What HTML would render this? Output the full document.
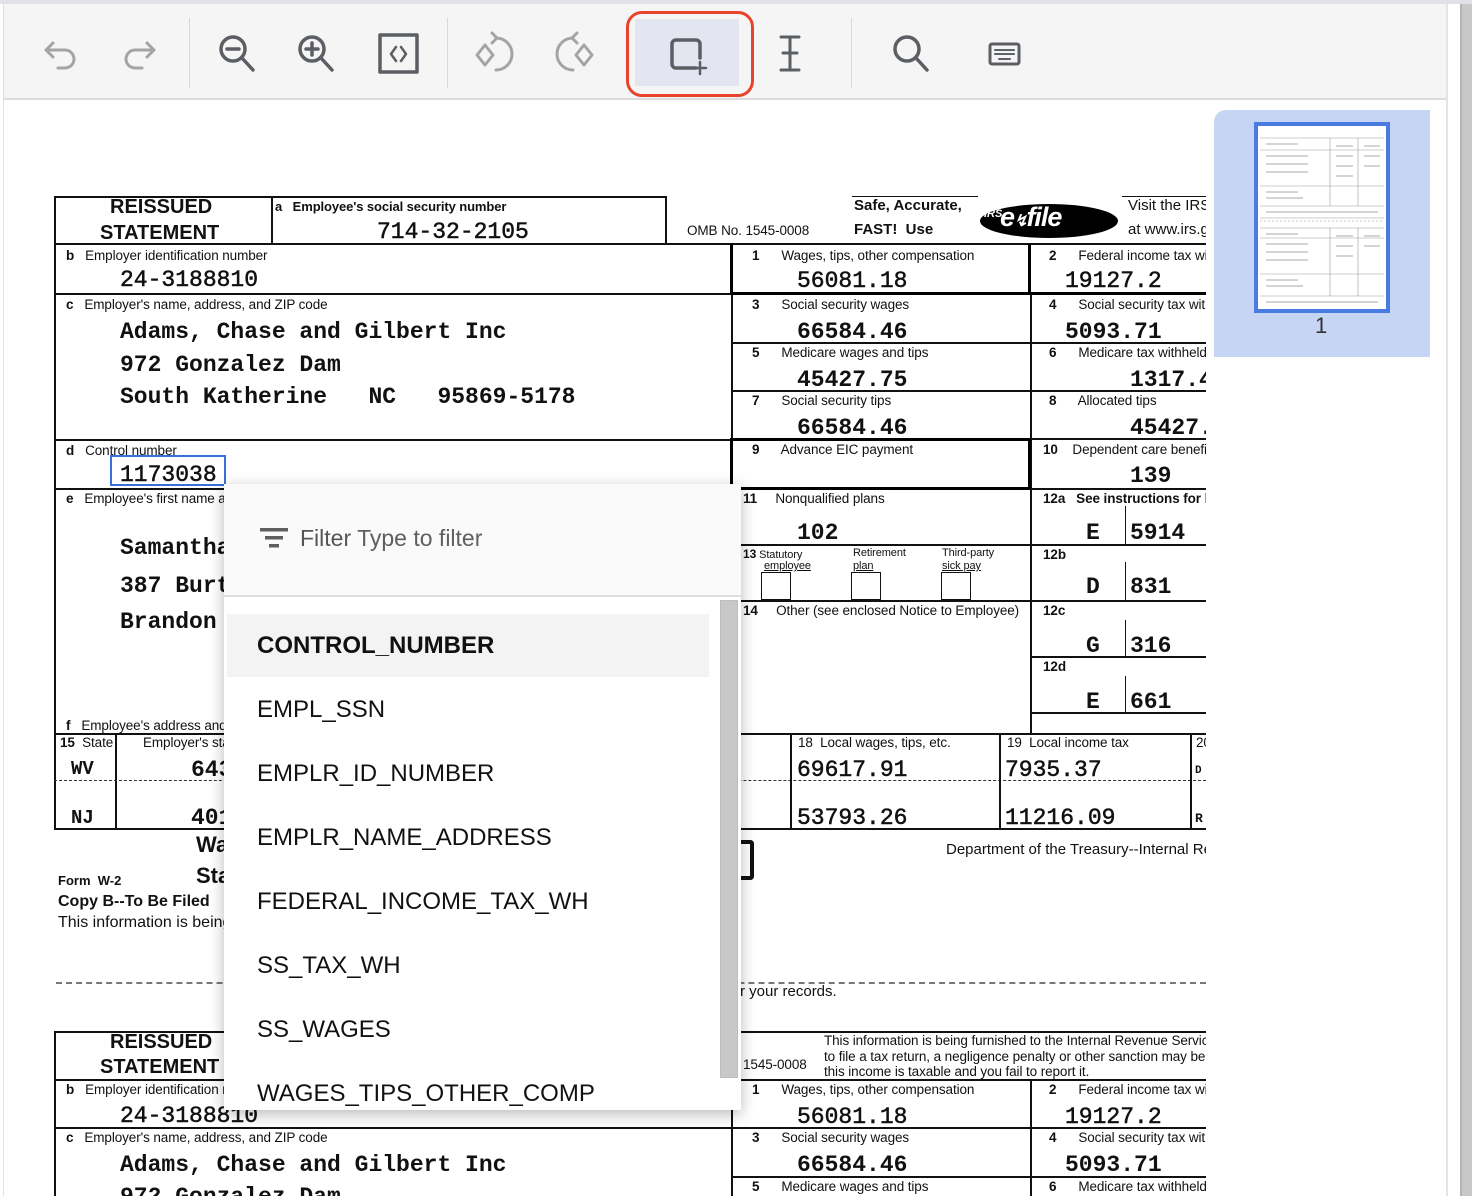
<!DOCTYPE html>
<html><head><meta charset="utf-8">
<style>
*{margin:0;padding:0;box-sizing:border-box}
body{width:1472px;height:1196px;overflow:hidden;background:#fff;position:relative;font-family:"Liberation Sans",Arial,sans-serif;color:#111}
.a{position:absolute}
.t{position:absolute;white-space:nowrap}
.l{position:absolute;white-space:nowrap;font-size:13.5px;letter-spacing:-0.1px;color:#111}
.lb{font-weight:bold}
.v{position:absolute;white-space:nowrap;font-family:"Liberation Mono",monospace;font-weight:bold;font-size:23px;color:#111;margin-top:1px}
.h{position:absolute;background:#111;height:1.5px}
.vl{position:absolute;background:#111;width:1.5px}
.hk{position:absolute;background:#000;height:3px}
.vk{position:absolute;background:#000;width:3px}
.dash{position:absolute;height:0;border-top:1px dashed #333}
.item{position:absolute;left:33px;font-size:24px;color:#111;white-space:nowrap}
</style></head><body>

<div class="a" style="left:0;top:0;width:1472px;height:4px;background:#e2e2e6"></div>
<div class="a" style="left:3px;top:4px;width:1444px;height:96px;background:#f5f5f5;border-bottom:2px solid #dcdcdc;border-left:1px solid #ddd"></div>
<div class="a" style="left:1446px;top:4px;width:2px;height:1192px;background:#e4e4e4"></div>
<div class="a" style="left:1460px;top:4px;width:12px;height:1192px;background:#c8c8c8;border-left:2px solid #b4b4b4"></div>
<div class="a" style="left:3px;top:100px;width:1px;height:1096px;background:#e4e4e4"></div>

<div class="a" style="left:189px;top:18px;width:1px;height:70px;background:#d8d8d8"></div>
<div class="a" style="left:447px;top:18px;width:1px;height:70px;background:#d8d8d8"></div>
<div class="a" style="left:851px;top:18px;width:1px;height:70px;background:#d8d8d8"></div>

<div class="a" style="left:635px;top:19px;width:104px;height:67px;background:#e3e6f1"></div>
<div class="a" style="left:626px;top:11px;width:128px;height:86px;border:3px solid #e8432b;border-radius:16px"></div>

<svg class="a" style="left:0;top:0" width="1100" height="100" fill="none" stroke-linecap="round" stroke-linejoin="round">
 <g stroke="#a4a4a4" stroke-width="3">
  <path d="M53 43 L46 50 L53 57"/><path d="M47 50 H65 a9 9 0 0 1 0 18 H58"/>
 </g>
 <g stroke="#a4a4a4" stroke-width="3">
  <path d="M147 43 L154 50 L147 57"/><path d="M153 50 H135 a9 9 0 0 0 0 18 H142"/>
 </g>
 <g stroke="#5b5e63" stroke-width="3.5">
  <circle cx="233" cy="49" r="12"/><path d="M242 58 L253 70"/><path d="M227 49 H239"/>
 </g>
 <g stroke="#5b5e63" stroke-width="3.5">
  <circle cx="312" cy="49" r="12"/><path d="M321 58 L332 70"/><path d="M306 49 H318 M312 43 V55"/>
 </g>
 <rect x="380" y="35" width="37" height="37" stroke="#5b5e63" stroke-width="3.5"/>
 <path d="M396 47 L391 54 L396 61 M401 47 L406 54 L401 61" stroke="#5b5e63" stroke-width="2.5"/>
 <g stroke="#a4a4a4" stroke-width="3">
  <path d="M485 45 L477 55 L485 65 L493 55 Z"/>
  <path d="M496 38 a16 16 0 0 1 0 32"/><path d="M492 33 L497 38 L492 43"/>
 </g>
 <g stroke="#a4a4a4" stroke-width="3">
  <path d="M584 45 L592 55 L584 65 L576 55 Z"/>
  <path d="M573 38 a16 16 0 0 0 0 32"/><path d="M577 33 L572 38 L577 43"/>
 </g>
 <path d="M696 68 H676 a4 4 0 0 1 -4 -4 V44 a4 4 0 0 1 4 -4 H696 a4 4 0 0 1 4 4 V58" stroke="#5b5e63" stroke-width="3.5"/>
 <path d="M700 62 V74 M694 68 H706" stroke="#5b5e63" stroke-width="2.5"/>
 <g stroke="#5b5e63" stroke-width="3">
  <path d="M781 37 H799 M781 70 H799 M790 37 V70 M783 53 H797"/>
 </g>
 <g stroke="#5b5e63" stroke-width="3.5">
  <circle cx="907" cy="49" r="12"/><path d="M916 58 L927 70"/>
 </g>
 <rect x="990" y="44" width="29" height="20" rx="2" stroke="#5b5e63" stroke-width="3"/>
 <path d="M995 50 H1014 M995 54 H1014 M999 59 H1010" stroke="#5b5e63" stroke-width="2" stroke-dasharray="2 1.5"/>
</svg>

<div class="a" style="left:1214px;top:110px;width:216px;height:247px;background:#c5d5f3;border-radius:12px 0 0 0"></div>
<div class="a" style="left:1254px;top:122px;width:136px;height:191px;background:#fff;border:4px solid #4a7be0;overflow:hidden">
 <svg width="128" height="183" stroke="#999" stroke-width="0.6">
  <path d="M2 12 H126 M2 24 H126 M2 60 H126 M2 80 H126 M2 92 H126 M72 12 V80 M100 12 V80"/>
  <path d="M2 102 H126 M2 112 H126 M2 148 H126 M2 170 H126 M72 102 V170 M100 102 V170"/>
  <path d="M2 95 H126" stroke-dasharray="2 2"/>
  <g stroke="#bbb" stroke-width="1.2"><path d="M8 18 H40 M8 30 H50 M8 38 H50 M8 46 H50 M78 20 H95 M78 30 H95 M78 40 H95 M78 50 H95 M106 20 H122 M106 30 H122 M106 40 H122 M8 66 H40 M8 72 H45 M8 86 H120"/>
  <path d="M8 108 H40 M8 118 H50 M8 126 H50 M8 134 H50 M78 110 H95 M78 120 H95 M78 130 H95 M106 110 H122 M106 120 H122 M8 154 H40 M8 160 H45 M8 176 H120"/></g>
 </svg>
</div>
<div class="t" style="left:1315px;top:313px;font-size:22px;color:#333">1</div>

<div class="a" style="left:0;top:0;width:1206px;height:1196px;overflow:hidden">
 <div class="h" style="left:54px;top:196px;width:612px"></div>
 <div class="h" style="left:54px;top:243px;width:1152px;height:2px"></div>
 <div class="vl" style="left:54px;top:196px;height:634px"></div>
 <div class="vl" style="left:271px;top:196px;height:48px"></div>
 <div class="vl" style="left:665px;top:196px;height:48px"></div>
 <div class="h" style="left:852px;top:196px;width:126px;height:1px"></div>
 <div class="h" style="left:1122px;top:196px;width:84px;height:1px"></div>
 <div class="t lb" style="left:110px;top:196px;font-size:20px;font-weight:bold">REISSUED</div>
 <div class="t" style="left:100px;top:222px;font-size:20px;font-weight:bold">STATEMENT</div>
 <div class="l lb" style="left:275px;top:199px;font-weight:bold;font-size:13px">a&nbsp;&nbsp; Employee's social security number</div>
 <div class="v" style="left:377px;top:218px;font-weight:normal;-webkit-text-stroke:0.5px #111">714-32-2105</div>
 <div class="l" style="left:687px;top:223px">OMB No. 1545-0008</div>
 <div class="t" style="left:854px;top:197px;font-size:15px;font-weight:bold">Safe, Accurate,</div>
 <div class="t" style="left:854px;top:221px;font-size:15px;font-weight:bold">FAST!&nbsp; Use</div>
 <div class="a" style="left:980px;top:204px;width:138px;height:34px;background:#000;border-radius:50%"></div>
 <div class="t" style="left:984px;top:208px;font-size:11px;font-style:italic;font-weight:bold;color:#fff">IRS</div>
 <div class="t" style="left:1000px;top:202px;font-size:27px;font-style:italic;font-weight:bold;color:#fff;letter-spacing:-1px">e<span style="font-size:16px">↯</span>file</div>
 <div class="t" style="left:1128px;top:197px;font-size:15px">Visit the IRS</div>
 <div class="t" style="left:1128px;top:221px;font-size:15px">at www.irs.gov</div>

 <div class="l" style="left:66px;top:248px"><b>b</b>&nbsp;&nbsp; Employer identification number</div>
 <div class="v" style="left:120px;top:266px;font-weight:normal;-webkit-text-stroke:0.5px #111">24-3188810</div>
 <div class="h" style="left:54px;top:293px;width:678px"></div>
 <div class="l" style="left:66px;top:297px"><b>c</b>&nbsp;&nbsp; Employer's name, address, and ZIP code</div>
 <div class="v" style="left:120px;top:318px">Adams, Chase and Gilbert Inc</div>
 <div class="v" style="left:120px;top:351px">972 Gonzalez Dam</div>
 <div class="v" style="left:120px;top:383px">South Katherine&nbsp;&nbsp; NC&nbsp;&nbsp;&nbsp;95869-5178</div>
 <div class="h" style="left:54px;top:439px;width:678px"></div>
 <div class="l" style="left:66px;top:443px"><b>d</b>&nbsp;&nbsp; Control number</div>
 <div class="v" style="left:120px;top:461px;font-weight:normal;-webkit-text-stroke:0.5px #111">1173038</div>
 <div class="a" style="left:110px;top:455px;width:116px;height:31px;border:2px solid #3b6fd8"></div>
 <div class="h" style="left:54px;top:488px;width:678px"></div>
 <div class="l" style="left:66px;top:491px"><b>e</b>&nbsp;&nbsp; Employee's first name and initial</div>
 <div class="v" style="left:120px;top:534px">Samantha</div>
 <div class="v" style="left:120px;top:572px">387 Burton</div>
 <div class="v" style="left:120px;top:608px">Brandon</div>
 <div class="l" style="left:66px;top:718px"><b>f</b>&nbsp;&nbsp; Employee's address and ZIP code</div>
 <div class="h" style="left:54px;top:733px;width:1152px"></div>
 <div class="vl" style="left:115px;top:733px;height:96px"></div>
 <div class="l" style="left:60px;top:735px"><b>15</b>&nbsp; State</div>
 <div class="l" style="left:143px;top:735px">Employer's state ID number</div>
 <div class="v" style="left:71px;top:757px;font-size:19px">WV</div>
 <div class="v" style="left:191px;top:756px">6432</div>
 <div class="dash" style="left:54px;top:780px;width:1152px"></div>
 <div class="v" style="left:71px;top:806px;font-size:19px">NJ</div>
 <div class="v" style="left:191px;top:804px">4012</div>
 <div class="h" style="left:54px;top:828px;width:1152px"></div>
 <div class="vl" style="left:790px;top:733px;height:96px"></div>
 <div class="vl" style="left:999px;top:733px;height:96px"></div>
 <div class="vl" style="left:1190px;top:733px;height:96px"></div>
 <div class="l" style="left:798px;top:735px">18&nbsp; Local wages, tips, etc.</div>
 <div class="l" style="left:1007px;top:735px">19&nbsp; Local income tax</div>
 <div class="l" style="left:1196px;top:735px">20</div>
 <div class="v" style="left:797px;top:756px;font-weight:normal;-webkit-text-stroke:0.5px #111">69617.91</div>
 <div class="v" style="left:1005px;top:756px;font-weight:normal;-webkit-text-stroke:0.5px #111">7935.37</div>
 <div class="v" style="left:797px;top:804px;font-weight:normal;-webkit-text-stroke:0.5px #111">53793.26</div>
 <div class="v" style="left:1005px;top:804px;font-weight:normal;-webkit-text-stroke:0.5px #111">11216.09</div>
 <div class="v" style="left:1195px;top:764px;font-size:11px">D</div>
 <div class="v" style="left:1195px;top:810px;font-size:13px">R</div>

 <div class="vk" style="left:730px;top:244px;height:50px"></div>
 <div class="vk" style="left:1028px;top:244px;height:50px"></div>
 <div class="hk" style="left:730px;top:292px;width:476px"></div>
 <div class="vl" style="left:731px;top:294px;height:440px"></div>
 <div class="vl" style="left:1030px;top:294px;height:440px"></div>
 <div class="h" style="left:731px;top:342px;width:475px"></div>
 <div class="h" style="left:731px;top:390px;width:475px"></div>
 <div class="hk" style="left:730px;top:438px;width:302px"></div>
 <div class="h" style="left:1030px;top:438px;width:176px"></div>
 <div class="vk" style="left:730px;top:438px;height:52px"></div>
 <div class="vk" style="left:1028px;top:438px;height:52px"></div>
 <div class="hk" style="left:730px;top:487px;width:302px"></div>
 <div class="h" style="left:1030px;top:488px;width:176px"></div>
 <div class="h" style="left:731px;top:544px;width:475px"></div>
 <div class="h" style="left:731px;top:600px;width:300px"></div>
 <div class="h" style="left:1030px;top:600px;width:176px"></div>
 <div class="h" style="left:1030px;top:656px;width:176px"></div>
 <div class="h" style="left:1030px;top:712px;width:176px"></div>
 <div class="vl" style="left:1125px;top:506px;height:38px;width:1px"></div>
 <div class="vl" style="left:1125px;top:562px;height:38px;width:1px"></div>
 <div class="vl" style="left:1125px;top:620px;height:37px;width:1px"></div>
 <div class="vl" style="left:1125px;top:676px;height:37px;width:1px"></div>

 <div class="l" style="left:752px;top:248px"><b>1</b>&nbsp;&nbsp;&nbsp;&nbsp;&nbsp; Wages, tips, other compensation</div>
 <div class="v" style="left:797px;top:267px;font-weight:normal;-webkit-text-stroke:0.5px #111">56081.18</div>
 <div class="l" style="left:1049px;top:248px"><b>2</b>&nbsp;&nbsp;&nbsp;&nbsp;&nbsp; Federal income tax withheld</div>
 <div class="v" style="left:1065px;top:267px;font-weight:normal;-webkit-text-stroke:0.5px #111">19127.2</div>
 <div class="l" style="left:752px;top:297px"><b>3</b>&nbsp;&nbsp;&nbsp;&nbsp;&nbsp; Social security wages</div>
 <div class="v" style="left:797px;top:318px">66584.46</div>
 <div class="l" style="left:1049px;top:297px"><b>4</b>&nbsp;&nbsp;&nbsp;&nbsp;&nbsp; Social security tax withheld</div>
 <div class="v" style="left:1065px;top:318px">5093.71</div>
 <div class="l" style="left:752px;top:345px"><b>5</b>&nbsp;&nbsp;&nbsp;&nbsp;&nbsp; Medicare wages and tips</div>
 <div class="v" style="left:797px;top:366px">45427.75</div>
 <div class="l" style="left:1049px;top:345px"><b>6</b>&nbsp;&nbsp;&nbsp;&nbsp;&nbsp; Medicare tax withheld</div>
 <div class="v" style="left:1130px;top:366px">1317.42</div>
 <div class="l" style="left:752px;top:393px"><b>7</b>&nbsp;&nbsp;&nbsp;&nbsp;&nbsp; Social security tips</div>
 <div class="v" style="left:797px;top:414px">66584.46</div>
 <div class="l" style="left:1049px;top:393px"><b>8</b>&nbsp;&nbsp;&nbsp;&nbsp;&nbsp; Allocated tips</div>
 <div class="v" style="left:1130px;top:414px">45427.75</div>
 <div class="l" style="left:752px;top:442px"><b>9</b>&nbsp;&nbsp;&nbsp;&nbsp;&nbsp; Advance EIC payment</div>
 <div class="l" style="left:1043px;top:442px"><b>10</b>&nbsp;&nbsp;&nbsp; Dependent care benefits</div>
 <div class="v" style="left:1130px;top:462px">139</div>
 <div class="l" style="left:743px;top:491px"><b>11</b>&nbsp;&nbsp;&nbsp;&nbsp; Nonqualified plans</div>
 <div class="v" style="left:797px;top:519px">102</div>
 <div class="l lb" style="left:1043px;top:491px">12a&nbsp;&nbsp; See instructions for box 12</div>
 <div class="v" style="left:1086px;top:519px">E</div><div class="v" style="left:1130px;top:519px">5914</div>
 <div class="l" style="left:743px;top:547px;font-size:11px"><b style="font-size:12px">13</b> Statutory</div>
 <div class="l" style="left:764px;top:560px;font-size:11px;text-decoration:underline">employee</div>
 <div class="l" style="left:853px;top:547px;font-size:11px">Retirement</div>
 <div class="l" style="left:853px;top:560px;font-size:11px;text-decoration:underline">plan</div>
 <div class="l" style="left:942px;top:547px;font-size:11px">Third-party</div>
 <div class="l" style="left:942px;top:560px;font-size:11px;text-decoration:underline">sick pay</div>
 <div class="a" style="left:761px;top:572px;width:30px;height:28px;border:1.5px solid #111"></div>
 <div class="a" style="left:851px;top:572px;width:30px;height:28px;border:1.5px solid #111"></div>
 <div class="a" style="left:941px;top:572px;width:30px;height:28px;border:1.5px solid #111"></div>
 <div class="l lb" style="left:1043px;top:547px">12b</div>
 <div class="v" style="left:1086px;top:573px">D</div><div class="v" style="left:1130px;top:573px">831</div>
 <div class="l" style="left:743px;top:603px"><b>14</b>&nbsp;&nbsp;&nbsp;&nbsp; Other (see enclosed Notice to Employee)</div>
 <div class="l lb" style="left:1043px;top:603px">12c</div>
 <div class="v" style="left:1086px;top:632px">G</div><div class="v" style="left:1130px;top:632px">316</div>
 <div class="l lb" style="left:1043px;top:659px">12d</div>
 <div class="v" style="left:1086px;top:688px">E</div><div class="v" style="left:1130px;top:688px">661</div>

 <div class="t" style="left:196px;top:832px;font-size:22px;font-weight:bold">Wage and Tax</div>
 <div class="t" style="left:196px;top:863px;font-size:22px;font-weight:bold">Statement</div>
 <div class="t" style="left:58px;top:873px;font-size:13px;font-weight:bold">Form&nbsp; W-2</div>
 <div class="t" style="left:58px;top:893px;font-size:16px;font-weight:bold">Copy B--To Be Filed</div>
 <div class="t" style="left:58px;top:914px;font-size:16px">This information is being</div>
 <div class="a" style="left:738px;top:840px;width:16px;height:40px;border:4px solid #111;border-left:none;border-radius:0 4px 4px 0"></div>
 <div class="t" style="left:946px;top:841px;font-size:15px">Department of the Treasury--Internal Revenue Service</div>
 <div class="a" style="left:56px;top:982px;width:1150px;height:0;border-top:2.5px dashed #777"></div>
 <div class="t" style="left:740px;top:983px;font-size:15px">r your records.</div>

 <div class="h" style="left:54px;top:1031px;width:1152px"></div>
 <div class="vl" style="left:54px;top:1031px;height:170px"></div>
 <div class="t" style="left:110px;top:1031px;font-size:20px;font-weight:bold">REISSUED</div>
 <div class="t" style="left:100px;top:1056px;font-size:20px;font-weight:bold">STATEMENT</div>
 <div class="h" style="left:54px;top:1079px;width:1152px"></div>
 <div class="l" style="left:743px;top:1057px">1545-0008</div>
 <div class="l" style="left:824px;top:1033px">This information is being furnished to the Internal Revenue Service. If you are required</div>
 <div class="l" style="left:824px;top:1049px">to file a tax return, a negligence penalty or other sanction may be imposed on you if</div>
 <div class="l" style="left:824px;top:1064px">this income is taxable and you fail to report it.</div>
 <div class="l" style="left:66px;top:1082px"><b>b</b>&nbsp;&nbsp; Employer identification number</div>
 <div class="v" style="left:120px;top:1102px;font-weight:normal;-webkit-text-stroke:0.5px #111">24-3188810</div>
 <div class="h" style="left:54px;top:1127px;width:1152px"></div>
 <div class="l" style="left:66px;top:1130px"><b>c</b>&nbsp;&nbsp; Employer's name, address, and ZIP code</div>
 <div class="v" style="left:120px;top:1151px">Adams, Chase and Gilbert Inc</div>
 <div class="v" style="left:120px;top:1183px">972 Gonzalez Dam</div>
 <div class="vl" style="left:731px;top:1079px;height:120px"></div>
 <div class="vl" style="left:1030px;top:1079px;height:120px"></div>
 <div class="h" style="left:731px;top:1176px;width:475px"></div>
 <div class="l" style="left:752px;top:1082px"><b>1</b>&nbsp;&nbsp;&nbsp;&nbsp;&nbsp; Wages, tips, other compensation</div>
 <div class="v" style="left:797px;top:1103px;font-weight:normal;-webkit-text-stroke:0.5px #111">56081.18</div>
 <div class="l" style="left:1049px;top:1082px"><b>2</b>&nbsp;&nbsp;&nbsp;&nbsp;&nbsp; Federal income tax withheld</div>
 <div class="v" style="left:1065px;top:1103px;font-weight:normal;-webkit-text-stroke:0.5px #111">19127.2</div>
 <div class="l" style="left:752px;top:1130px"><b>3</b>&nbsp;&nbsp;&nbsp;&nbsp;&nbsp; Social security wages</div>
 <div class="v" style="left:797px;top:1151px">66584.46</div>
 <div class="l" style="left:1049px;top:1130px"><b>4</b>&nbsp;&nbsp;&nbsp;&nbsp;&nbsp; Social security tax withheld</div>
 <div class="v" style="left:1065px;top:1151px">5093.71</div>
 <div class="l" style="left:752px;top:1179px"><b>5</b>&nbsp;&nbsp;&nbsp;&nbsp;&nbsp; Medicare wages and tips</div>
 <div class="l" style="left:1049px;top:1179px"><b>6</b>&nbsp;&nbsp;&nbsp;&nbsp;&nbsp; Medicare tax withheld</div>
</div>

<div class="a" style="left:224px;top:484px;width:517px;height:626px;background:#fff;box-shadow:0 4px 14px rgba(0,0,0,0.28);overflow:hidden">
 <div class="a" style="left:0;top:0;width:517px;height:113px;background:#fafafa;border-bottom:2px solid #dedede"></div>
 <svg class="a" style="left:36px;top:44px" width="28" height="22"><rect x="0" y="0" width="28" height="3.5" fill="#5f5f5f"/><rect x="5" y="8" width="18" height="3.5" fill="#5f5f5f"/><rect x="9" y="16" width="10" height="3.5" fill="#5f5f5f"/></svg>
 <div class="t" style="left:76px;top:41px;font-size:23px;color:#5f5f5f"><span style="color:#555">Filter</span> Type to filter</div>
 <div class="a" style="left:3px;top:130px;width:482px;height:63px;background:#f3f3f3"></div>
 <div class="item" style="top:148px;font-weight:bold">CONTROL_NUMBER</div>
 <div class="item" style="top:212px">EMPL_SSN</div>
 <div class="item" style="top:276px">EMPLR_ID_NUMBER</div>
 <div class="item" style="top:340px">EMPLR_NAME_ADDRESS</div>
 <div class="item" style="top:404px">FEDERAL_INCOME_TAX_WH</div>
 <div class="item" style="top:468px">SS_TAX_WH</div>
 <div class="item" style="top:532px">SS_WAGES</div>
 <div class="item" style="top:596px">WAGES_TIPS_OTHER_COMP</div>
 <div class="a" style="left:496px;top:116px;width:18px;height:478px;background:#c8c8c8;border:1px solid #bdbdbd"></div>
</div>

</body></html>
